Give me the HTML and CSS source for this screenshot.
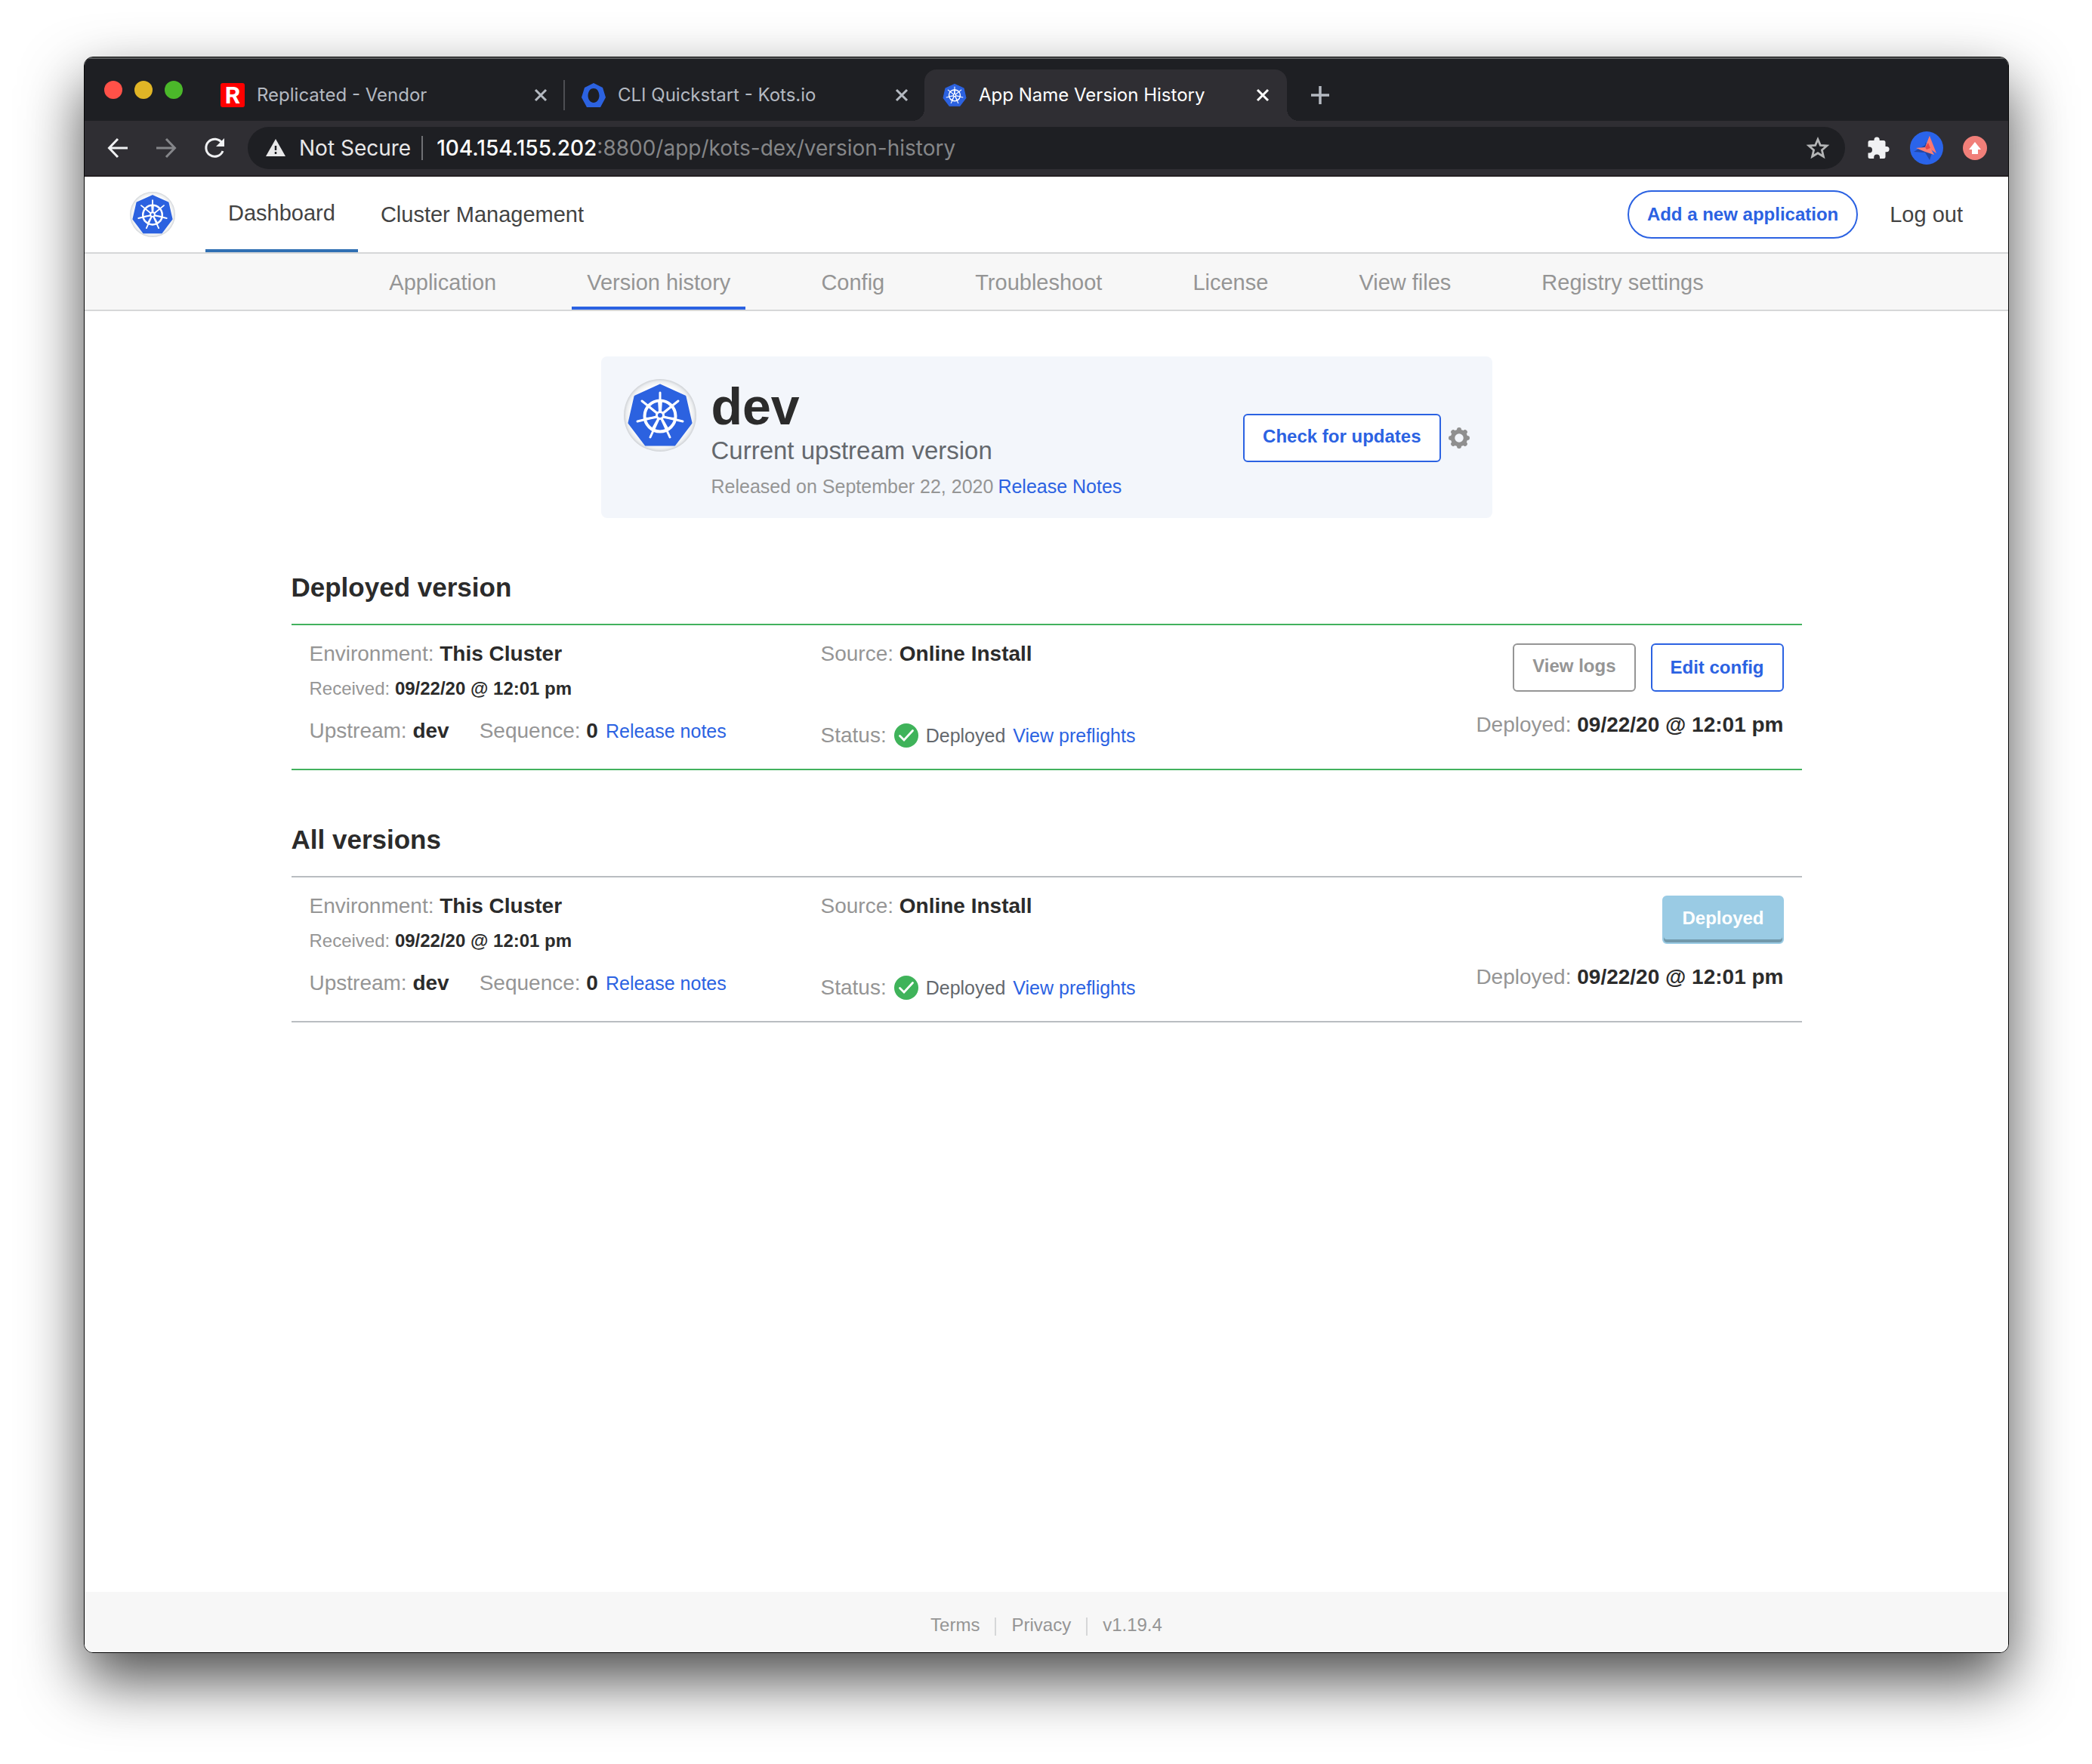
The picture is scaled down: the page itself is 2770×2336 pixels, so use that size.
FILE: index.html
```html
<!DOCTYPE html>
<html lang="en">
<head>
<meta charset="utf-8">
<meta name="viewport" content="width=device-width, initial-scale=1">
<title>App Name Version History</title>
<link rel="stylesheet" href="styles.css">
</head>
<body>
<svg class="defs" width="0" height="0" aria-hidden="true">
  <defs>
    <radialGradient id="disc" cx="50%" cy="50%" r="50%">
      <stop offset="0.8" stop-color="#fff"/>
      <stop offset="0.93" stop-color="#eceef0"/>
      <stop offset="1" stop-color="#cfd2d6"/>
    </radialGradient>
    <symbol id="wheel" viewBox="-44 -44 88 88">
      <path d="M0-40 33-25 41 10 19 39H-19L-41 10-33-25Z" fill="#2c62e0" stroke="#2c62e0" stroke-width="3" stroke-linejoin="round"/>
      <g fill="none" stroke="#fff" stroke-linecap="round">
        <circle r="20.5" cy="1" stroke-width="4"/>
        <path stroke-width="3" d="M0-5V-30M4-3 24-19M5 2 30 8M2 5 13 29M-2 5-13 29M-5 2-30 8M-4-3-24-19"/>
        <path stroke-width="2" d="M-1-5-2-20M1-5 2-20M5-3 17-13M-5-3-17-13M5 3 20 4M-5 3-20 4M3 5 11 19M-3 5-11 19"/>
      </g>
      <circle r="6" fill="#fff"/>
      <circle r="3" fill="#2c62e0"/>
    </symbol>
    <symbol id="close" viewBox="0 0 24 24">
      <path d="M5 5 19 19M19 5 5 19" stroke="currentColor" stroke-width="3" fill="none"/>
    </symbol>
    <symbol id="check" viewBox="0 0 32 32">
      <circle cx="16" cy="16" r="16" fill="#3fb35a"/>
      <path d="M7.500 16.500 13 22 24.500 9.500" fill="none" stroke="#fff" stroke-width="2.800" stroke-linecap="round"/>
    </symbol>
  </defs>
</svg>

<div class="window">
  <div class="tabstrip">
    <div class="lights"><span class="light red"></span><span class="light yellow"></span><span class="light green"></span></div>
    <div class="tab divided">
      <span class="favicon replicated">R</span>
      <span class="tab-title">Replicated - Vendor</span>
      <button class="icon-btn" aria-label="Close tab"><svg width="24" height="24"><use href="#close"/></svg></button>
    </div>
    <div class="tab">
      <svg class="favicon" viewBox="0 0 32 32"><path fill="#2c62e0" fill-rule="evenodd" d="M16 0 28 6 32 19 25 32H7L0 19 4 6ZM16 7C12 7 9 10 8.500 16.500 8.500 22 12 26 16 26S23.500 22 23.500 16.500C23 10 20 7 16 7Z"/></svg>
      <span class="tab-title">CLI Quickstart - Kots.io</span>
      <button class="icon-btn" aria-label="Close tab"><svg width="24" height="24"><use href="#close"/></svg></button>
    </div>
    <div class="tab active">
      <svg class="favicon"><use href="#wheel"/></svg>
      <span class="tab-title">App Name Version History</span>
      <button class="icon-btn" aria-label="Close tab"><svg width="24" height="24"><use href="#close"/></svg></button>
    </div>
    <button class="icon-btn new-tab" aria-label="New tab"><svg width="24" height="24" viewBox="0 0 24 24"><path d="M12 0V24M0 12H24" stroke="currentColor" stroke-width="3.500"/></svg></button>
  </div>

  <div class="toolbar">
    <div class="nav-buttons">
      <button class="icon-btn bright" aria-label="Back"><svg width="32" height="32" viewBox="0 0 32 32"><path d="M16 4 4.500 16 16 28M5 16H29" fill="none" stroke="currentColor" stroke-width="3"/></svg></button>
      <button class="icon-btn faded" aria-label="Forward"><svg width="32" height="32" viewBox="0 0 32 32"><path d="M16 4 27.500 16 16 28M27 16H3" fill="none" stroke="currentColor" stroke-width="3"/></svg></button>
      <button class="icon-btn bright" aria-label="Reload"><svg width="32" height="32" viewBox="0 0 32 32"><path d="M26 9.500A11.500 11.500 0 1 0 27 20" fill="none" stroke="currentColor" stroke-width="3"/><path d="M29 3V14H18Z" fill="currentColor"/></svg></button>
    </div>
    <div class="omnibox">
      <svg width="26" height="24" viewBox="0 0 26 24"><path d="M13 0 26 23H0Z" fill="#e8e8e9"/><path d="M13 9V15M13 17V20" stroke="#1e1f23" stroke-width="2.500"/></svg>
      <span class="secure">Not Secure</span>
      <span class="omni-sep"></span>
      <span class="host">104.154.155.202</span><input class="path" type="text" aria-label="Address" value=":8800/app/kots-dex/version-history">
      <button class="icon-btn star" aria-label="Bookmark"><svg width="32" height="32" viewBox="0 0 32 32"><path d="M16 4.500 19.300 12.300 28 13 21.400 18.800 23.400 27.200 16 22.700 8.600 27.200 10.600 18.800 4 13 12.700 12.300Z" fill="none" stroke="currentColor" stroke-width="2.800"/></svg></button>
    </div>
    <div class="extensions">
      <button class="icon-btn bright" aria-label="Extensions"><svg width="30" height="30" viewBox="0 0 30 30"><path fill="currentColor" d="M3 5H8.500V4A3.600 3.600 0 0 1 15.700 4V5H21Q23.500 5 23.500 7.500V13H25A3.600 3.600 0 0 1 25 20.200H23.500V26.500Q23.500 29 21 29H16V27.500A3.900 3.900 0 0 0 8.200 27.500V29H3Q.5 29 .5 26.500V21.500H2A4 4 0 0 0 2 13.500H.5V7.500Q.5 5 3 5Z"/></svg></button>
      <button class="icon-btn" aria-label="Profile"><svg width="44" height="44" viewBox="0 0 44 44"><circle cx="22" cy="22" r="22" fill="#2a64ea"/><path d="M5 27 20 18 21 14 25 26 29 29 26 38 20 28Z" fill="#2147a5"/><path d="M26 6 35 29 23 21 20 22Z" fill="#f9776f"/><path d="M8 22 20 21 26 6 27 22 32 31 20 27Z" fill="#fa8076"/><path d="M20 21 24 15 27 22 22 24Z" fill="#e4484c"/></svg></button>
      <button class="icon-btn" aria-label="Update"><svg width="32" height="32" viewBox="0 0 32 32"><circle cx="16" cy="16" r="16" fill="#f17f79"/><path d="M16 8 24 18H20V24H12V18H8Z" fill="#fff"/></svg></button>
    </div>
  </div>

  <header class="header">
    <a class="logo" href="#"><svg width="60" height="60" viewBox="-48 -48 96 96"><circle r="48" fill="url(#disc)"/><use href="#wheel" x="-44" y="-44" width="88" height="88"/></svg></a>
    <nav class="main-nav">
      <a class="current" href="#">Dashboard</a>
      <a href="#">Cluster Management</a>
    </nav>
    <div class="header-actions">
      <button class="btn pill">Add a new application</button>
      <a class="logout" href="#">Log out</a>
    </div>
  </header>

  <nav class="subnav">
    <a href="#">Application</a>
    <a class="current" href="#">Version history</a>
    <a href="#">Config</a>
    <a href="#">Troubleshoot</a>
    <a href="#">License</a>
    <a href="#">View files</a>
    <a href="#">Registry settings</a>
  </nav>

  <main class="content">
    <section class="upstream">
      <svg width="96" height="96" viewBox="-48 -48 96 96"><circle r="48" fill="url(#disc)"/><use href="#wheel" x="-44" y="-44" width="88" height="88"/></svg>
      <div class="upstream-info">
        <h1>dev</h1>
        <p class="upstream-label">Current upstream version</p>
        <p class="released"><span>Released on September 22, 2020</span><a href="#">Release Notes</a></p>
      </div>
      <div class="upstream-actions">
        <button class="btn raised">Check for updates</button>
        <button class="icon-btn gear" aria-label="Update settings"><svg width="28" height="28" viewBox="-14 -14 28 28"><circle r="8.500" fill="none" stroke="currentColor" stroke-width="5.500"/><g stroke="currentColor" stroke-width="6" stroke-linecap="round"><path d="M0-9V-11M0 9V11M-9 0H-11M9 0H11M6.500-6.500 7.800-7.800M-6.500-6.500-7.800-7.800M6.500 6.500 7.800 7.800M-6.500 6.500-7.800 7.800"/></g></svg></button>
      </div>
    </section>

    <section class="versions">
      <h2>Deployed version</h2>
      <div class="row deployed">
        <div class="col-env">
          <p>Environment: <b>This Cluster</b></p>
          <p class="small">Received: <b>09/22/20 @ 12:01 pm</b></p>
          <p class="line"><span>Upstream: <b>dev</b></span><span class="sequence">Sequence: <b>0</b></span><a href="#">Release notes</a></p>
        </div>
        <div class="col-status">
          <p>Source: <b>Online Install</b></p>
          <p class="status">Status: <svg width="32" height="32"><use href="#check"/></svg><span class="state">Deployed</span><a href="#">View preflights</a></p>
        </div>
        <div class="col-actions">
          <div class="buttons"><button class="btn raised muted">View logs</button><button class="btn">Edit config</button></div>
          <p>Deployed: <b>09/22/20 @ 12:01 pm</b></p>
        </div>
      </div>
    </section>

    <section class="versions">
      <h2>All versions</h2>
      <div class="row">
        <div class="col-env">
          <p>Environment: <b>This Cluster</b></p>
          <p class="small">Received: <b>09/22/20 @ 12:01 pm</b></p>
          <p class="line"><span>Upstream: <b>dev</b></span><span class="sequence">Sequence: <b>0</b></span><a href="#">Release notes</a></p>
        </div>
        <div class="col-status">
          <p>Source: <b>Online Install</b></p>
          <p class="status">Status: <svg width="32" height="32"><use href="#check"/></svg><span class="state">Deployed</span><a href="#">View preflights</a></p>
        </div>
        <div class="col-actions">
          <div class="buttons"><button class="btn raised filled" disabled>Deployed</button></div>
          <p>Deployed: <b>09/22/20 @ 12:01 pm</b></p>
        </div>
      </div>
    </section>
  </main>

  <footer class="footer">
    <a href="#">Terms</a>
    <a href="#">Privacy</a>
    <span>v1.19.4</span>
  </footer>
</div>
</body>
</html>
```
FILE: styles.css
```css
* { box-sizing: border-box; }

body {
  margin: 0;
  min-height: 100vh;
  padding: 75px 110px 147px 111px;
  display: flex;
  background: #fff;
  color: #959595;
  font: 28px/28px "Liberation Sans", Arial, sans-serif;
}

.defs { position: absolute; }

h1, h2, p { margin: 0; }
a { color: #2b62e2; text-decoration: none; }
b { color: #2b2b2b; }
svg { display: block; flex: none; }

.window {
  flex: 1;
  min-width: 0;
  display: flex;
  flex-direction: column;
  border: 1px solid #050505;
  border-radius: 12px;
  overflow: hidden;
  background: #fff;
  box-shadow: 0 36px 80px rgba(0, 0, 0, .7);
}

.icon-btn {
  display: flex;
  padding: 0;
  border: 0;
  background: none;
  color: inherit;
}
.bright { color: #f0f1f3; }
.faded { color: #85868a; }

/* Browser chrome */
.tabstrip {
  display: flex;
  height: 84px;
  padding: 14px 0 0 26px;
  border-top: 2px solid #5c5e5f;
  background: #1e1f23;
  color: #b4b9c1;
  font: 24px/32px Inter, sans-serif;
}
.lights {
  display: flex;
  gap: 16px;
  margin: 15px 26px 0 0;
}
.light { width: 24px; height: 24px; border-radius: 50%; }
.red { background: #ff5148; }
.yellow { background: #e1b526; }
.green { background: #4bb82a; }

.tab {
  position: relative;
  display: flex;
  align-items: center;
  gap: 16px;
  width: 478px;
  padding: 0 18px 0 24px;
}
.tab-title { flex: 1; white-space: nowrap; }
.favicon { width: 32px; height: 32px; }
.replicated {
  border-radius: 3px;
  background: #f00;
  color: #fff;
  font: bold 32px/32px Roboto, sans-serif;
  text-align: center;
}
.divided::after {
  content: "";
  position: absolute;
  right: -2px;
  width: 2px;
  height: 40px;
  background: #4d4e53;
}
.tab.active {
  width: 480px;
  padding-right: 20px;
  border-radius: 16px 16px 0 0;
  background: #2f2e33;
  color: #fff;
}
.tab.active::before,
.tab.active::after {
  content: "";
  position: absolute;
  bottom: 0;
  width: 16px;
  height: 16px;
}
.tab.active::before {
  left: -16px;
  background: radial-gradient(circle at 0 0, transparent 16px, #2f2e33 16px);
}
.tab.active::after {
  right: -16px;
  background: radial-gradient(circle at 100% 0, transparent 16px, #2f2e33 16px);
}
.new-tab { align-items: center; margin-left: 32px; }

.toolbar {
  display: flex;
  align-items: center;
  height: 74px;
  padding: 0 28px;
  border-bottom: 2px solid #231f22;
  background: #2f2e33;
}
.nav-buttons { display: flex; gap: 32px; }
.omnibox {
  flex: 1;
  display: flex;
  align-items: center;
  height: 56px;
  margin: 0 30px 0 28px;
  padding: 0 20px 0 24px;
  border-radius: 28px;
  background: #1e1f23;
  color: #e8e8e9;
  font: 28px/32px Inter, sans-serif;
}
.secure { margin: 0 14px 0 18px; }
.omni-sep { width: 2px; height: 32px; margin-right: 18px; background: #6f7074; }
.host { color: #fff; font-weight: 500; }
.path {
  flex: 1;
  min-width: 0;
  padding: 0;
  border: 0;
  background: none;
  color: #858688;
  font: inherit;
}
.star { color: #b3b4b5; }
.extensions { display: flex; align-items: center; gap: 26px; }

/* App header */
.header {
  display: flex;
  align-items: center;
  height: 102px;
  padding: 0 60px;
  border-bottom: 2px solid #d6d7d8;
  font-size: 29px;
}
.main-nav { display: flex; align-self: stretch; margin-left: 40px; }
.main-nav a { display: flex; align-items: center; padding: 0 30px; color: #434343; }
.main-nav .current { border-bottom: 4px solid #3070b3; }
.header-actions { display: flex; align-items: center; gap: 42px; margin-left: auto; }
.logout { color: #434343; }

.btn {
  height: 64px;
  padding: 0 24px;
  border: 2px solid #2b62e2;
  border-radius: 6px;
  background: #fff;
  color: #2b62e2;
  font: bold 24px/28px "Liberation Sans", Arial, sans-serif;
}
.pill { border-radius: 32px; }
.raised { padding-bottom: 4px; }
.muted { border-color: #959595; color: #959595; }
.filled {
  border-color: #9acbe4;
  background: #9acbe4;
  color: #fff;
  box-shadow: inset 0 -4px #7299ab;
}

.subnav {
  display: flex;
  justify-content: center;
  gap: 80px;
  border-bottom: 2px solid #d6d7d8;
  background: #f7f7f7;
  font-size: 29px;
}
.subnav a {
  padding: 24px 20px 18px;
  border-bottom: 4px solid transparent;
  color: #959595;
}
.subnav .current { border-color: #2b62e2; }

/* Version history */
.content { flex: 1; padding: 60px 40px; }

.upstream {
  display: flex;
  align-items: flex-start;
  max-width: 1180px;
  margin: 0 auto;
  padding: 30px 30px 28px;
  border-radius: 8px;
  background: #f3f6fb;
}
.upstream-info { margin-left: 20px; }
h1 { color: #2b2b2b; font-size: 68px; line-height: 72px; }
.upstream-label { margin: 5px 0 15px; color: #64686d; font-size: 33px; line-height: 36px; }
.released { display: flex; gap: 6px; font-size: 25px; }
.upstream-actions { display: flex; align-items: center; align-self: center; gap: 10px; margin-left: auto; }
.gear { color: #8f8f8f; }

.versions { max-width: 2000px; margin: 72px auto 0; }
h2 { margin-bottom: 28px; color: #2b2b2b; font-size: 35px; line-height: 40px; }
.row {
  display: grid;
  grid-template-columns: 677px 1fr auto;
  padding: 24px 24px 28px;
  border: solid #b9bdc1;
  border-width: 2px 0;
}
.row.deployed { border-color: #42b15d; }
.small { margin: 18px 0 28px; font-size: 24px; }
.line { display: flex; align-items: baseline; gap: 10px; }
.line a, .status a, .state { font-size: 25px; }
.sequence { margin-left: 30px; }
.col-status { display: flex; flex-direction: column; gap: 78px; }
.status { display: flex; align-items: center; gap: 10px; }
.state { color: #64686d; }
.col-actions { display: flex; flex-direction: column; align-items: flex-end; gap: 30px; }
.buttons { display: flex; gap: 20px; }

.footer {
  display: flex;
  align-items: center;
  justify-content: center;
  padding: 30px 0 22px;
  background: #f7f7f7;
  font-size: 24px;
}
.footer a { color: inherit; }
.footer a::after {
  content: "";
  display: inline-block;
  width: 2px;
  height: 24px;
  margin: 0 20px;
  background: #d6d7d8;
  vertical-align: middle;
}
```
